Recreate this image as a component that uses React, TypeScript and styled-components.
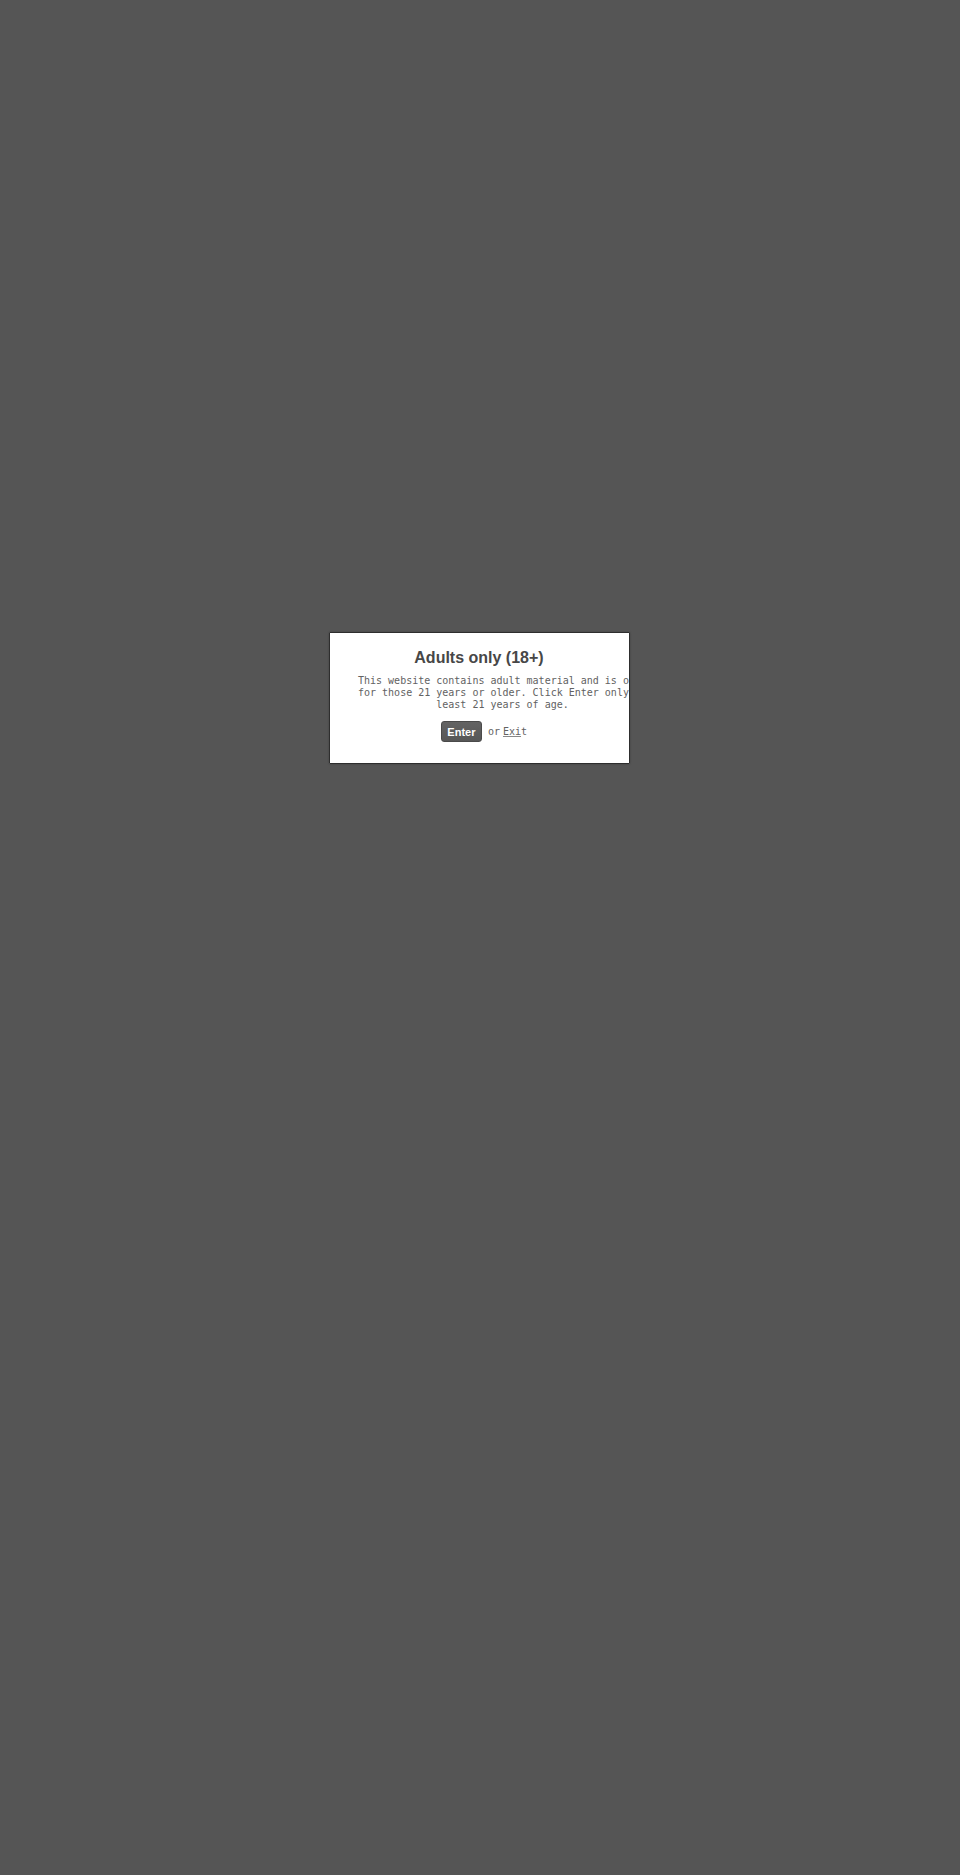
import React from "react";
import styled, { createGlobalStyle } from "styled-components";

const GlobalStyle = createGlobalStyle`
    html, body {
        margin: 0;
        padding: 0;
        background: #555555;
    }
`;

const Overlay = styled.div`
    min-height: 1875px;
    box-sizing: border-box;
    padding-top: 632px;
    display: flex;
    flex-direction: column;
    align-items: center;
    background: #555555;
`;

const Modal = styled.div`
    width: 301px;
    height: 132px;
    box-sizing: border-box;
    background: #ffffff;
    border: 1px solid #2e2e2e;
    border-radius: 1px;
    overflow: hidden;
    padding-top: 14px;
    display: flex;
    flex-direction: column;
    transform: translateX(-1px);
    box-shadow: 0 0 2px rgba(0, 0, 0, 0.3);
`;

const Title = styled.h1`
    margin: 0;
    text-align: center;
    font-family: "Liberation Sans", Arial, sans-serif;
    font-weight: bold;
    font-size: 16px;
    line-height: 22px;
    color: #474747;
`;

const Message = styled.p`
    margin: 6px 0 0 28px;
    width: 290px;
    flex-shrink: 0;
    text-align: center;
    font-family: "DejaVu Sans Mono", "Liberation Mono", monospace;
    font-size: 10px;
    line-height: 12px;
    color: #626262;
`;

const Actions = styled.div`
    margin-top: 10px;
    display: flex;
    align-items: center;
    justify-content: center;
    padding-left: 10px;
    font-family: "DejaVu Sans Mono", "Liberation Mono", monospace;
    font-size: 10px;
    color: #626262;
`;

const EnterButton = styled.button`
    width: 41px;
    height: 21px;
    padding: 0;
    border: 1px solid #4a4a4a;
    border-radius: 3px;
    background: linear-gradient(#636363, #575757);
    color: #ffffff;
    font-family: "Liberation Sans", Arial, sans-serif;
    font-weight: bold;
    font-size: 11px;
    cursor: pointer;
`;

const Or = styled.span`
    margin-left: 6px;
    margin-right: 3px;
`;

const ExitLink = styled.a`
    color: #626262;
    text-decoration: underline;
    text-decoration-color: #888888;
    cursor: pointer;
`;

export default function App() {
    return (
        <>
            <GlobalStyle />
            <Overlay>
                <Modal>
                    <Title>Adults only (18+)</Title>
                    <Message>
                        This website contains adult material and is only for those 21 years or older. Click Enter only if least 21 years of age.
                    </Message>
                    <Actions>
                        <EnterButton>Enter</EnterButton>
                        <Or>or</Or>
                        <span><ExitLink>Exi</ExitLink>t</span>
                    </Actions>
                </Modal>
            </Overlay>
        </>
    );
}
